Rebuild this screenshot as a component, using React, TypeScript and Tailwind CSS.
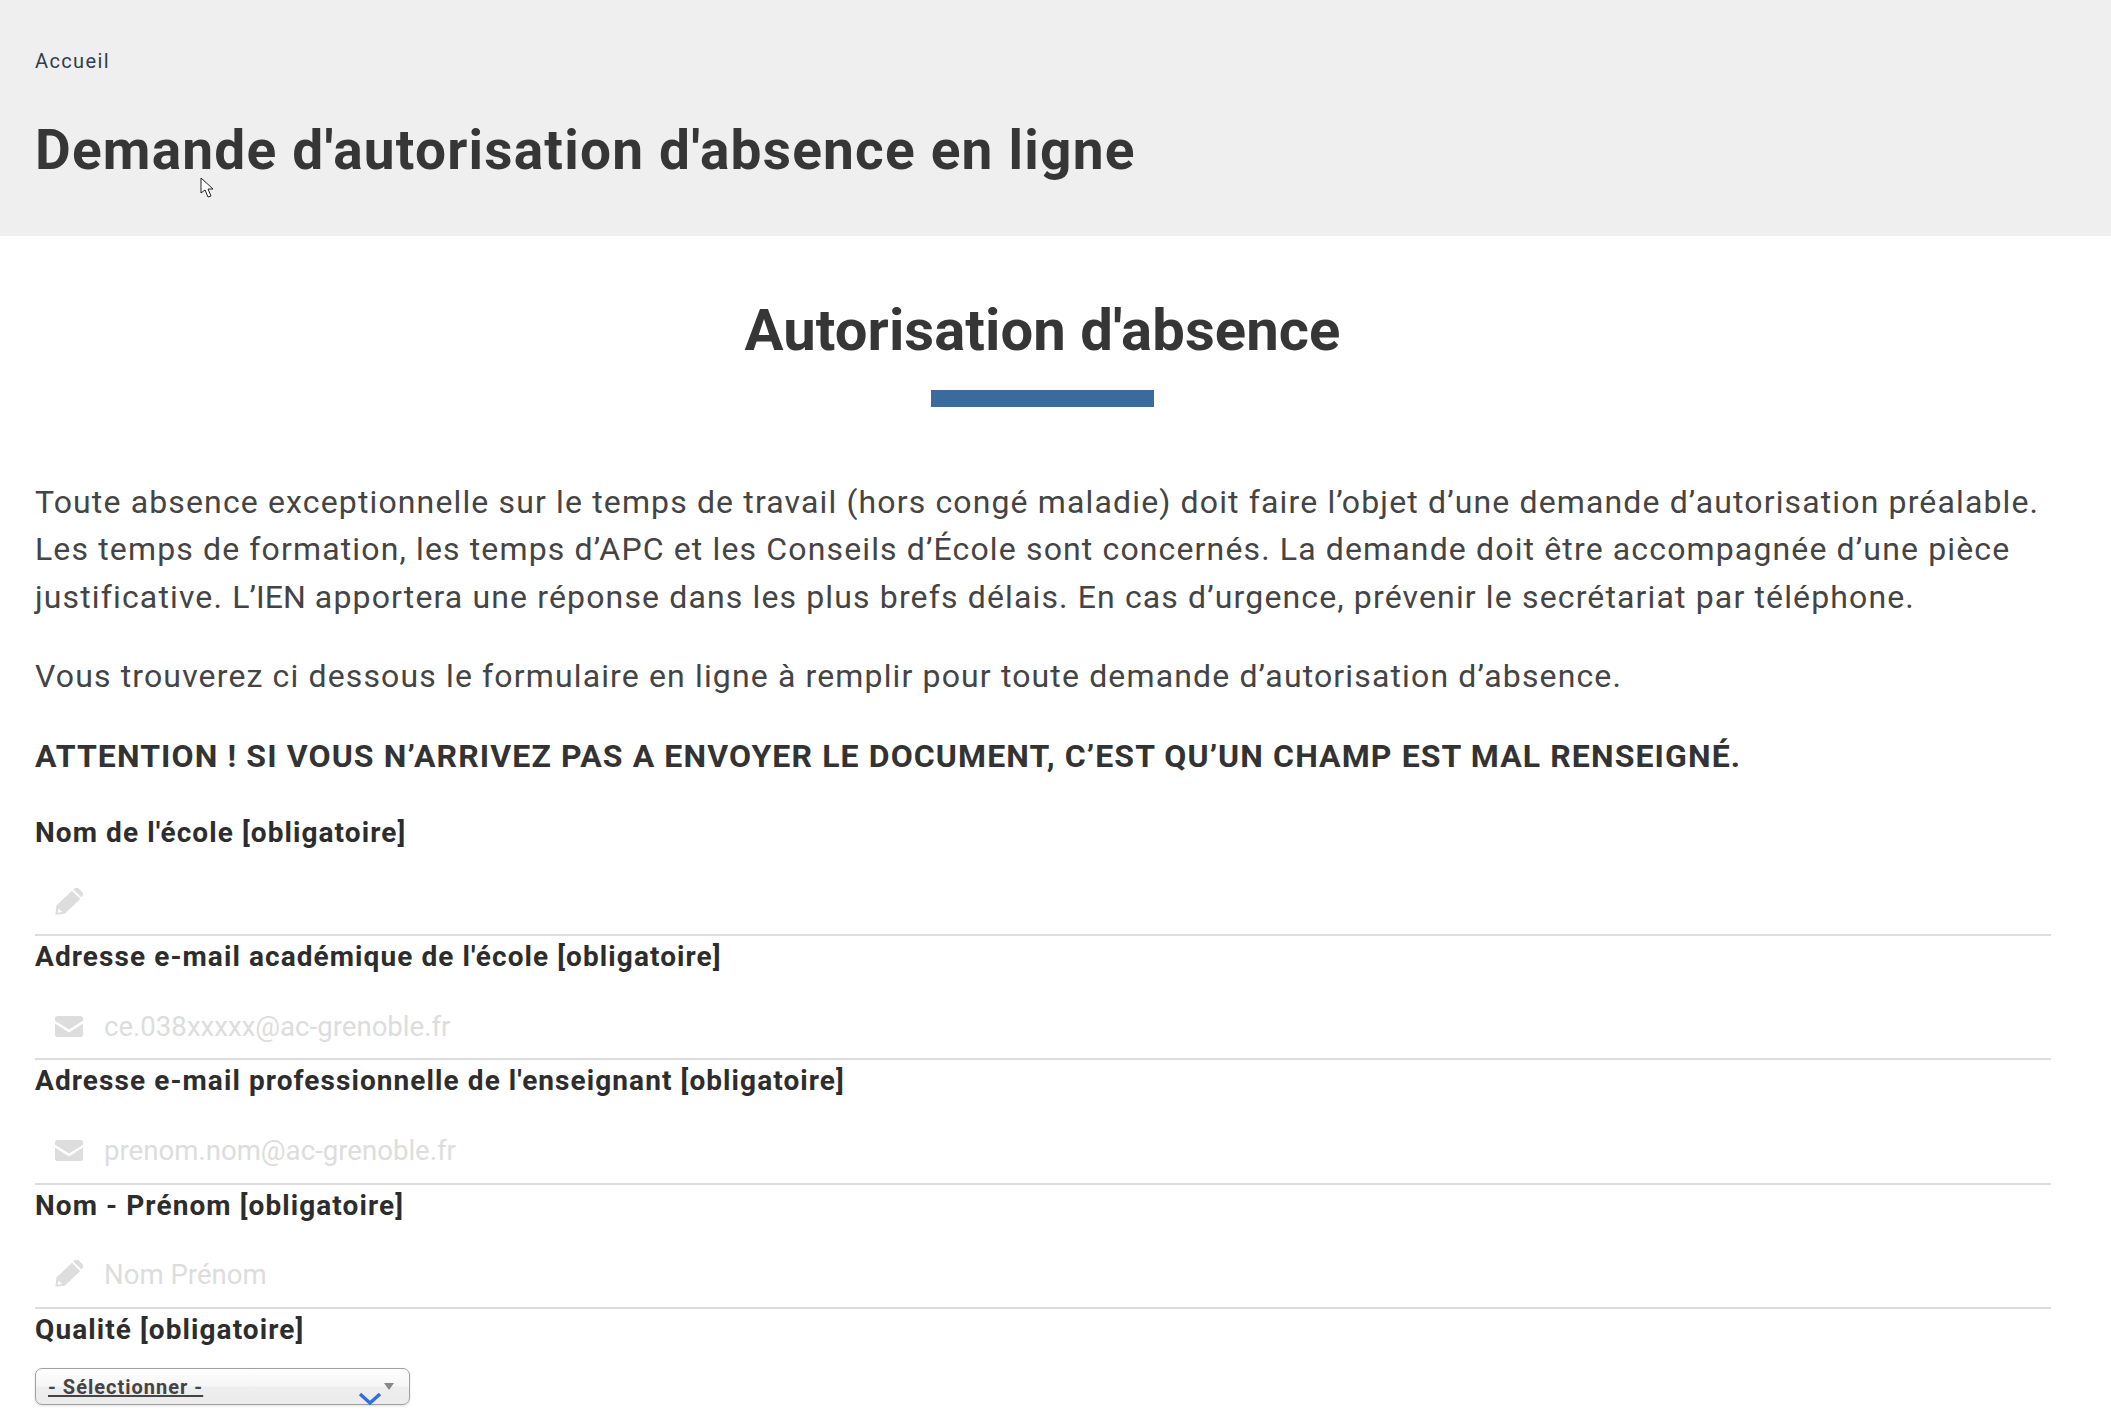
// App.tsx
import React from 'react';

const fields = [
    { label: "Nom de l'école [obligatoire]", placeholder: '', icon: 'pencil' },
    { label: "Adresse e-mail académique de l'école [obligatoire]", placeholder: 'ce.038xxxxx@ac-grenoble.fr', icon: 'mail' },
    { label: "Adresse e-mail professionnelle de l'enseignant [obligatoire]", placeholder: 'prenom.nom@ac-grenoble.fr', icon: 'mail' },
    { label: 'Nom - Prénom [obligatoire]', placeholder: 'Nom Prénom', icon: 'pencil' },
];

function PencilIcon() {
    return (
        <svg className="-mt-[2px] h-[27px] w-[28px] shrink-0" viewBox="0 0 28 27" fill="#dddddd">
            <path d="M18.4 1.4 19.6.3a2.8 2.8 0 0 1 3.9 0l3.9 3.9a2.8 2.8 0 0 1 0 3.9L26.2 9.3Z" />
            <path d="M.4 26.8 1.4 17.6 17 2.8 25.2 11 9.8 25.8ZM3.6 20.4 2.7 24.8 7.1 23.9Z" fillRule="evenodd" />
        </svg>
    );
}

function MailIcon() {
    return (
        <svg className="h-[21px] w-[28px] shrink-0" viewBox="0 0 28 21" fill="#dddddd">
            <path d="M2.5 0h23A2.5 2.5 0 0 1 28 2.5v2.2L14 13.6 0 4.7V2.5A2.5 2.5 0 0 1 2.5 0Z" />
            <path d="M0 7.6 14 16.4 28 7.6v10.9a2.5 2.5 0 0 1-2.5 2.5h-23A2.5 2.5 0 0 1 0 18.5Z" />
        </svg>
    );
}

export default function App() {
    return (
        <div className="relative h-[1425px] overflow-hidden bg-white font-['Roboto',sans-serif] text-[#333333]">
            {/* Page header */}
            <header className="h-[236px] bg-[#efefef] pl-[35px] pt-[48px]">
                <a className="block text-[20px] leading-[27px] tracking-[1.37px] text-[#2c3e50]">Accueil</a>
                <h1 className="mt-[42px] text-[55px] leading-[66px] font-bold tracking-[1.2px] text-[#363636]">
                    Demande d'autorisation d'absence en ligne
                </h1>
            </header>

            {/* Mouse pointer from the capture */}
            <svg className="absolute left-[200px] top-[177px]" width="15" height="22" viewBox="0 0 15 22">
                <path d="M1 1v15l4-3 3 7 3-1-3-7h5z" fill="#fff" stroke="#222" strokeWidth="1" />
            </svg>

            <main className="pl-[35px] pr-[60px]">
                <h2 className="mt-[59px] pr-[1px] text-center text-[58px] leading-[70px] font-bold tracking-[0.08px] text-[#363636]">
                    Autorisation d'absence
                </h2>
                <div className="ml-[896px] mt-[25px] h-[17px] w-[223px] bg-[#3b6a9c]" />

                <p className="mt-[71.7px] text-[32px] leading-[47.5px] tracking-[1.14px] text-[#444444]">
                    Toute absence exceptionnelle sur le temps de travail (hors congé maladie) doit faire l’objet d’une demande d’autorisation préalable. Les temps de formation, les temps d’APC et les Conseils d’École sont concernés. La demande doit être accompagnée d’une pièce
                    <span className="block">justificative. <span className="tracking-[0.06px]">L’IEN</span> apportera une réponse dans les plus brefs délais. En cas d’urgence, prévenir le secrétariat par téléphone.</span>
                </p>
                <p className="mt-[32px] text-[32px] leading-[47.5px] tracking-[1.14px] text-[#444444]">
                    Vous trouverez ci dessous le formulaire en ligne à remplir pour toute demande d’autorisation d’absence.
                </p>
                <p className="mt-[32.3px] text-[32px] leading-[47.5px] font-bold tracking-[1.11px] text-[#333333]">
                    ATTENTION ! SI VOUS N’ARRIVEZ PAS A ENVOYER LE DOCUMENT, C’EST QU’UN CHAMP EST MAL RENSEIGNÉ.
                </p>

                {/* Form fields */}
                <form className="mt-[31.5px]">
                    {fields.map(field => (
                        <div key={field.label}>
                            <label className="block text-[28px] leading-[42px] font-bold tracking-[1.08px] text-[#2d2d2d]">
                                {field.label}
                            </label>
                            <div className="flex h-[82.25px] items-center border-b-2 border-[#dddddd] pt-[16px] pl-[20px]">
                                {field.icon === 'pencil' ? <PencilIcon /> : <MailIcon />}
                                <input
                                    placeholder={field.placeholder}
                                    className="ml-[21px] flex-1 bg-transparent text-[27.6px] outline-none placeholder:text-[#dddddd]"
                                />
                            </div>
                        </div>
                    ))}

                    <label className="block text-[28px] leading-[42px] font-bold tracking-[1.08px] text-[#2d2d2d]">
                        Qualité [obligatoire]
                    </label>
                    <div className="relative mt-[17.5px] h-[37px] w-[375px] rounded-[7px] border border-[#a0a0a0] bg-[linear-gradient(#ffffff_0%,#f6f6f6_48%,#eeeeee_52%,#ebebeb_100%)] pl-[12px] shadow-sm">
                        <span className="text-[20px] leading-[36px] font-bold tracking-[1px] text-[#444444] underline">- Sélectionner -</span>
                        <div className="absolute right-[15px] top-[14px] h-0 w-0 border-x-[5px] border-t-[7px] border-x-transparent border-t-[#888888]" />
                        <svg className="absolute right-[27px] top-[23px]" width="24" height="14" viewBox="0 0 24 14">
                            <path d="M2 2l10 9L22 2" fill="none" stroke="#2f6fe0" strokeWidth="3.4" />
                        </svg>
                    </div>
                </form>
            </main>
        </div>
    );
}
